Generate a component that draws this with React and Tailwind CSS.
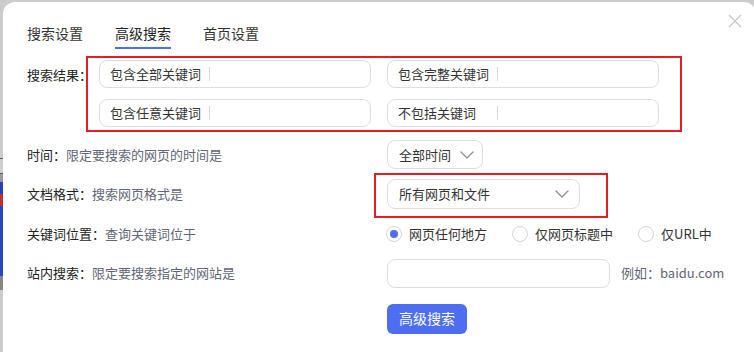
import React from 'react';

const font = "font-['Microsoft_YaHei','Noto_Sans_CJK_SC',sans-serif]";

const Chevron = ({ className }) => (
  <svg className={className} width="14" height="8" viewBox="0 0 14 8" fill="none">
    <path d="M1 1l6 6 6-6" stroke="#8b8e99" strokeWidth="1.3" strokeLinecap="round" strokeLinejoin="round" />
  </svg>
);

const KeywordInput = ({ label }) => (
  <div className="flex items-center w-[272px] h-[28px] border border-[#dcdee5] rounded-[8px] pl-[10px]">
    <span className="w-[99px] text-[13px] text-[#333]">{label}</span>
    <span className="w-px h-[14px] bg-[#d4d6dc]" />
  </div>
);

const Radio = ({ checked, label }) => (
  <label className="flex items-center gap-[7px]">
    <span className="w-[16px] h-[16px] rounded-full border border-[#d3d5dc] flex items-center justify-center">
      {checked && <span className="w-[8px] h-[8px] rounded-full bg-[#4e6ef2]" />}
    </span>
    <span className="text-[13px] text-[#333]">{label}</span>
  </label>
);

const Row = ({ label, desc, children, labelWidth = 'w-[360px]', labelClass = '' }) => (
  <div className="flex items-center">
    <div className={`${labelWidth} ${labelClass} shrink-0 whitespace-nowrap text-[13px]`}>
      <span className="text-[#222]">{label}：</span>
      <span className="text-[#626675]">{desc}</span>
    </div>
    {children}
  </div>
);

export default function App() {
  return (
    <div className={`w-[754px] h-[352px] bg-[#cccccc] overflow-hidden flex ${font}`}>
      {/* page behind the dialog */}
      <div className="w-[3px] shrink-0 flex flex-col">
        <div className="h-[158px] bg-[#cbcbcb]" />
        <div className="h-px bg-[#555]" />
        <div className="h-[14px] bg-[#d0d0d0]" />
        <div className="h-px bg-[#555]" />
        <div className="h-[8px] bg-[#9a9a9a]" />
        <div className="h-[12px] bg-[#2a3fb8]" />
        <div className="h-[12px] bg-[#c03030]" />
        <div className="h-[70px] bg-[#2b44c0]" />
        <div className="h-[14px] bg-[#888]" />
        <div className="flex-1 bg-[#cbcbcb]" />
      </div>

      <div className="mt-[2px] w-[753px] shrink-0 bg-white rounded-t-[12px] relative pl-[24px]">
        <button className="absolute left-[725px] top-[12px] w-[14px] h-[14px]">
          <svg width="14" height="14" viewBox="0 0 14 14">
            <path d="M1 1l12 12M13 1L1 13" stroke="#c4c7ce" strokeWidth="1.3" />
          </svg>
        </button>

        {/* tabs */}
        <div className="flex gap-[32px] pt-[21px] text-[14px] leading-[20px]">
          <div className="text-[#333] pb-[6px]">搜索设置</div>
          <div className="text-[#222] pb-[4px] border-b-[2px] border-[#4e6ef2]">高级搜索</div>
          <div className="text-[#333] pb-[6px]">首页设置</div>
        </div>

        <div className="flex flex-col mt-[7px]">
          {/* search result keywords */}
          <div className="flex items-start">
            <div className="w-[59px] shrink-0 whitespace-nowrap text-[13px] text-[#222] mt-[9px]">搜索结果：</div>
            <div className="border-2 border-[#e51c23] pl-[11px] pr-[21px] pt-[2px] pb-[3px] grid grid-cols-2 gap-x-[16px] gap-y-[11px]">
              <KeywordInput label="包含全部关键词" />
              <KeywordInput label="包含完整关键词" />
              <KeywordInput label="包含任意关键词" />
              <KeywordInput label="不包括关键词" />
            </div>
          </div>

          <div className="mt-[8px]">
            <Row label="时间" desc="限定要搜索的网页的时间是">
              <div className="flex items-center w-[96px] h-[29px] border border-[#dcdee5] rounded-[8px] pl-[11px] text-[13px] text-[#333]">
                全部时间
                <Chevron className="ml-[9px]" />
              </div>
            </Row>
          </div>

          <div className="mt-[4px]">
            <Row label="文档格式" desc="搜索网页格式是" labelWidth="w-[347px]" labelClass="mb-[4px]">
              <div className="border-2 border-[#e51c23] pl-[11px] pr-[26px] pt-[4px] pb-[7px]">
                <div className="flex items-center justify-between w-[193px] h-[30px] border border-[#dcdee5] rounded-[8px] pl-[11px] pr-[10px] text-[13px] text-[#333]">
                  所有网页和文件
                  <Chevron />
                </div>
              </div>
            </Row>
          </div>

          <div className="mt-[6px]">
            <Row label="关键词位置" desc="查询关键词位于" labelWidth="w-[359px]">
              <div className="flex items-center gap-[25px]">
                <Radio checked label="网页任何地方" />
                <Radio label="仅网页标题中" />
                <Radio label="仅URL中" />
              </div>
            </Row>
          </div>

          <div className="mt-[15px]">
            <Row label="站内搜索" desc="限定要搜索指定的网站是">
              <div className="w-[223px] h-[29px] border border-[#dcdee5] rounded-[8px]" />
              <span className="ml-[11px] text-[13px] text-[#626675]">例如：baidu.com</span>
            </Row>
          </div>

          <div className="mt-[16px] pl-[360px]">
            <button className="w-[80px] h-[30px] rounded-[6px] bg-[#4e6ef2] text-white text-[14px]">高级搜索</button>
          </div>
        </div>
      </div>
    </div>
  );
}
